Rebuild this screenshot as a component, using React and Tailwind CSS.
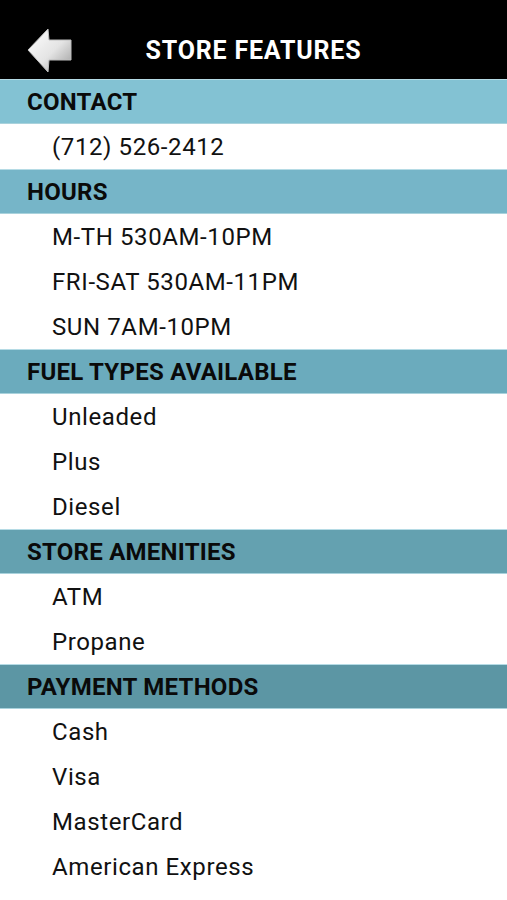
const sections = [
  { title: "CONTACT", bg: "bg-[#83c2d3]", items: ["(712) 526-2412"] },
  { title: "HOURS", bg: "bg-[#76b5c8]", items: ["M-TH 530AM-10PM", "FRI-SAT 530AM-11PM", "SUN 7AM-10PM"] },
  { title: "FUEL TYPES AVAILABLE", bg: "bg-[#6babbd]", items: ["Unleaded", "Plus", "Diesel"] },
  { title: "STORE AMENITIES", bg: "bg-[#64a1b0]", items: ["ATM", "Propane"] },
  { title: "PAYMENT METHODS", bg: "bg-[#5c96a4]", items: ["Cash", "Visa", "MasterCard", "American Express"] },
]

function BackArrow() {
  return (
    <svg width="48" height="50" viewBox="0 0 48 50">
      <defs>
        <linearGradient id="arrowFill" x1="0" y1="0" x2="1" y2="1">
          <stop offset="0" stopColor="#ffffff" />
          <stop offset="0.55" stopColor="#e4e4e4" />
          <stop offset="1" stopColor="#9a9a9a" />
        </linearGradient>
      </defs>
      <path d="M2 24 L22 3 L23 14 L45 14 L45 34 L23 34 L22 46 Z" fill="url(#arrowFill)" stroke="#bdbdbd" strokeWidth="1" strokeLinejoin="round" />
    </svg>
  )
}

export default function App() {
  return (
    <div className="w-[507px] h-[900px] bg-white overflow-hidden font-['Roboto',sans-serif]">
      <div className="h-[79px] bg-black grid grid-cols-[1fr_auto_1fr] items-center pt-[22px]">
        <div className="pl-[26px]"><BackArrow /></div>
        <h1 className="text-white font-bold text-[25px] leading-none tracking-[0.8px]">STORE FEATURES</h1>
        <div />
      </div>
      {sections.map((section) => (
        <div key={section.title}>
          <div className={`h-[45px] ${section.bg} border-t border-[#b5dbe5] border-b border-b-[#a9d2dc] flex items-center pl-[27px]`}>
            <span className="text-[24px] font-bold text-[#0a0a0a] tracking-[0.25px]">{section.title}</span>
          </div>
          {section.items.map((item) => (
            <div key={item} className="h-[45px] flex items-center pl-[52px]">
              <span className="text-[24px] text-[#111] tracking-[0.6px]">{item}</span>
            </div>
          ))}
        </div>
      ))}
    </div>
  )
}
